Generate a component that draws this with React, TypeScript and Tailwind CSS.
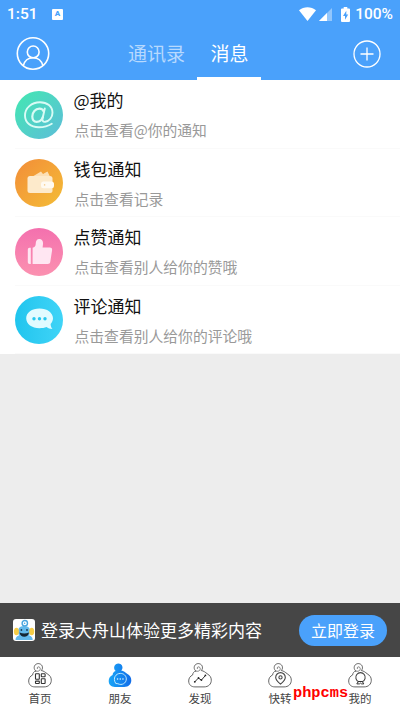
import { useState } from "react";
import type { ReactNode } from "react";

interface NoticeItem {
  title: string;
  desc: string;
  color: string;
  icon: ReactNode;
}

interface NavItem {
  label: string;
  icon: ReactNode;
}

const NOTICES: NoticeItem[] = [
  {
    title: "@我的",
    desc: "点击查看@你的通知",
    color: "bg-linear-to-br from-[#41e8b0] to-[#5cbcd8]",
    icon: (
      <svg className="h-12 w-12" viewBox="0 0 48 48" fill="none" stroke="#d9fbf5" strokeWidth="1.9" strokeLinecap="round" strokeLinejoin="round">
        <path d="M29.800 17.500l-2.200 9.800c-.6 2.700.6 3.900 2.700 3.500 4-.7 7.200-4.500 7.200-9 0-6.500-5.400-10.500-12.500-10.500-8.500 0-15 5.800-15 13.200 0 7.200 5.700 11.700 13.800 11.700 5 0 9.500-1.200 13-3.500" />
        <path strokeWidth="2.200" d="M28.800 20.600c-.7-2-2.200-3-4.400-3-4 0-7.100 3.800-7.100 8 0 3.300 1.700 5.300 4.400 5.300 2.900 0 5.200-2 6.100-4.900" />
      </svg>
    ),
  },
  {
    title: "钱包通知",
    desc: "点击查看记录",
    color: "bg-linear-to-br from-[#f28c38] to-[#f3bd36]",
    icon: (
      <svg className="h-12 w-12" viewBox="0 0 48 48" fill="#fdeacb">
        <path d="M18.500 17l7.500-4.500 2 2.500 4.500-2.600 2.200 4.600z" opacity=".85" />
        <path d="M15 17h20a2.500 2.500 0 012.500 2.500v12A2.500 2.500 0 0135 34H15a2.500 2.500 0 01-2.500-2.500v-12A2.500 2.500 0 0115 17z" />
        <rect x="26" y="22.600" width="13" height="6.600" rx="2.500" fill="#fffaf2" />
        <circle cx="29.600" cy="25.900" r=".8" fill="#f8cf92" />
      </svg>
    ),
  },
  {
    title: "点赞通知",
    desc: "点击查看别人给你的赞哦",
    color: "bg-linear-to-b from-[#f470ae] to-[#fb91b0]",
    icon: (
      <svg className="h-12 w-12" viewBox="0 0 48 48" fill="#ffe6f2">
        <path d="M14.500 19.700h1.300v16.300h-1.300a1.700 1.700 0 01-1.700-1.700V21.400a1.700 1.700 0 011.700-1.700z" />
        <path d="M17.600 19.700c2-.4 3-1.600 3.100-3.800.1-3.200 1.300-4.900 3.600-4.900 2.700 0 4 2 3.700 5l-.4 3.500h7.200c1.700 0 2.500 1.100 2.300 2.700l-1.800 11.600c-.2 1.500-1.100 2.200-2.600 2.200H17.600z" />
      </svg>
    ),
  },
  {
    title: "评论通知",
    desc: "点击查看别人给你的评论哦",
    color: "bg-linear-to-r from-[#1fc5ee] to-[#3fd4f7]",
    icon: (
      <svg className="h-12 w-12" viewBox="0 0 48 48">
        <path fill="#e2fbff" d="M24.500 12.500c7.600 0 13.500 4.200 13.500 9.800 0 2.200-.9 4-2.400 5.700.1 2.200.6 3.800 1.900 5-2.600 0-4.600-.7-6-1.900-2 .8-4.400 1.200-7 1.200-7.600 0-13.300-4.300-13.300-10s5.700-9.800 13.300-9.800z" />
        <g fill="#29c8ef">
          <circle cx="19" cy="22.700" r="1.700" />
          <circle cx="24.500" cy="22.700" r="1.700" />
          <circle cx="30" cy="22.700" r="1.700" />
        </g>
      </svg>
    ),
  },
];

function BodyIcon({ active, children }: { active?: boolean; children: ReactNode }) {
  return (
    <svg className="h-[26px] w-6" viewBox="0 0 24 26" fill="none" stroke={active ? "none" : "#666"} strokeWidth="1" strokeLinecap="round" strokeLinejoin="round">
      <defs>
        <linearGradient id="bodyFill" x1="0" y1="0" x2="1" y2="0">
          <stop offset="0" stopColor="#19a5f7" />
          <stop offset="1" stopColor="#126ce8" />
        </linearGradient>
      </defs>
      <path
        fill={active ? "url(#bodyFill)" : "#fff"}
        d="M7.700 9C5.600 7.300 5.600 3.900 7.900 2.300c2.400-1.600 5.900-.4 6.500 2.500.3 1.500-.2 2.800-1.200 3.700 2.600.4 4.100 1.800 5.900 3.200 2.800 1.800 4.200 3.400 4.200 6.500 0 4-2.900 6.700-7.200 6.700H6.900C3.100 24.900.7 22.600.7 19c0-2.900 1.500-4.900 3.900-6C4.800 11 5.800 9.500 7.700 9z"
      />
      {!active && <path d="M7.700 9c1.400.6 3 .3 3.900-.6 1.100-1.200.8-3-.6-3.500-1.200-.4-2.200.6-1.700 1.700" strokeWidth=".8" />}
      {children}
    </svg>
  );
}

const NAV_ITEMS: NavItem[] = [
  {
    label: "首页",
    icon: (
      <BodyIcon>
        <g stroke="#333" strokeWidth="1.100">
          <rect x="7.500" y="11.800" width="3.800" height="5.400" rx=".5" />
          <rect x="13.300" y="11.800" width="3.800" height="3" rx=".5" />
          <rect x="7.500" y="19.100" width="3.800" height="2.400" rx=".5" />
          <rect x="13.300" y="16.700" width="3.800" height="4.800" rx=".5" />
        </g>
      </BodyIcon>
    ),
  },
  {
    label: "朋友",
    icon: (
      <BodyIcon active>
        <path d="M7.600 21.200c-3.300-5 .3-9.800 4.700-9.800 3.400 0 6 2.300 6 5.500 0 4.400-4.400 6.800-8.100 5z" stroke="#c4ecff" strokeWidth="1" />
        <path d="M9.500 17h.1m2.600 0h.1m2.600 0h.1" stroke="#d9f3ff" strokeWidth="1.500" />
      </BodyIcon>
    ),
  },
  {
    label: "发现",
    icon: (
      <BodyIcon>
        <path d="M6.800 19.800l3.600-3.700 3 2 4-4.600" stroke="#333" strokeWidth="1" />
        <g fill="#222" stroke="none">
          <circle cx="6.800" cy="19.800" r=".9" />
          <circle cx="10.500" cy="16" r=".9" />
          <circle cx="13.400" cy="18.100" r=".9" />
          <circle cx="17.400" cy="13.400" r=".9" />
        </g>
      </BodyIcon>
    ),
  },
  {
    label: "快转",
    icon: (
      <BodyIcon>
        <path d="M12.500 22.200c-2.700-2.400-4.800-4.400-4.800-6.800a4.800 4.800 0 019.600 0c0 2.400-2.100 4.400-4.800 6.800z" stroke="#444" strokeWidth="1.100" />
        <circle cx="12.500" cy="15.400" r="1.600" stroke="#444" strokeWidth="1.100" />
      </BodyIcon>
    ),
  },
  {
    label: "我的",
    icon: (
      <BodyIcon>
        <path d="M10.700 19.700a4.700 4.700 0 113.600 0" stroke="#444" strokeWidth="1.100" />
        <path d="M10.700 19.500h3.600l1.500 2.400h-2.200l-1.100-.8-1.100.8H9.200z" stroke="#333" strokeWidth="1" />
      </BodyIcon>
    ),
  },
];

function StatusBar() {
  return (
    <div className="flex h-7 items-center pr-[7px] pl-[7px] font-[Roboto,sans-serif] text-[15.500px] font-medium text-white">
      <span className="w-[45px] pt-0.5">1:51</span>
      <span className="flex h-[11px] w-[11px] items-center justify-center rounded-[1px] bg-white text-[8px] font-black text-[#4aa1fb]">A</span>
      <div className="ml-auto flex items-center">
        <svg className="h-[14px] w-[17px]" viewBox="0 0 17 14" fill="#fff">
          <path d="M8.500 14L0 3.200C4.800-.7 12.200-.7 17 3.200z" />
        </svg>
        <svg className="ml-[3px] h-[13px] w-[13px]" viewBox="0 0 13 13" fill="#fff">
          <path d="M13 0v13H0z" opacity=".4" />
          <path d="M8 5v8H0z" />
        </svg>
        <svg className="ml-[9px] h-[15px] w-[9px]" viewBox="0 0 9 15">
          <path fill="#fff" d="M2.700 0h3.600v1.500H8a1 1 0 011 1V14a1 1 0 01-1 1H1a1 1 0 01-1-1V2.500a1 1 0 011-1h1.700z" />
          <path fill="#4aa1fb" d="M5.300 3.700L2 8.900h2v3.800l3.200-5.200h-1.900z" />
        </svg>
        <span className="ml-[5px] pt-0.5">100%</span>
      </div>
    </div>
  );
}

export default function App() {
  const [tab, setTab] = useState("消息");

  return (
    <div className="flex h-[710px] w-[400px] flex-col overflow-hidden bg-[#ededed] font-['Noto_Sans_CJK_SC','Liberation_Sans',sans-serif]">
      {/* Header */}
      <header className="h-20 shrink-0 bg-[#4aa1fb]">
        <StatusBar />
        <div className="flex h-[52px] items-center pr-[19px] pl-4">
          <svg className="h-[34px] w-[34px]" viewBox="0 0 34 34" fill="none" stroke="#fff" strokeWidth="1.6">
            <circle cx="17" cy="16.500" r="15.700" />
            <circle cx="17.200" cy="14.900" r="5.900" />
            <path d="M7.300 28.800c1.300-5 5-8 9.800-8s8.500 3 9.800 8" />
          </svg>
          <div className="ml-[67px] flex h-full">
            {["通讯录", "消息"].map((name) => (
              <button
                key={name}
                type="button"
                onClick={() => setTab(name)}
                className={[
                  "h-full border-b-[3px] pb-px text-[19px] leading-none",
                  name === "通讯录" ? "w-20 pr-px" : "w-16 pl-px",
                  tab === name ? "border-white text-white" : "border-transparent text-[#b7d9fe]",
                ].join(" ")}
              >
                {name}
              </button>
            ))}
          </div>
          <svg className="mb-px ml-auto h-7 w-7" viewBox="0 0 28 28" fill="none" stroke="#fff" strokeWidth="1.300">
            <circle cx="14" cy="14" r="13" />
            <path d="M14 7.500v13M7.500 14h13" />
          </svg>
        </div>
      </header>

      {/* Notices */}
      <ul className="h-[274px] shrink-0 bg-white">
        {NOTICES.map((n) => (
          <li key={n.title} className="ml-[15px] flex h-[68.500px] border-b border-[#fafafa]">
            <div className={["mt-[10.500px] h-12 w-12 shrink-0 rounded-full", n.color].join(" ")}>{n.icon}</div>
            <div className="ml-[10.500px] flex-1">
              <p className="mt-2 text-[17px] leading-6 text-[#111]">{n.title}</p>
              <p className="mt-[8px] ml-px text-[14.800px] leading-5 text-[#999]">{n.desc}</p>
            </div>
          </li>
        ))}
      </ul>

      {/* Login banner */}
      <div className="mt-auto flex h-[54px] shrink-0 items-center bg-[#464646] pr-[13px] pl-[13px]">
        <svg className="h-[22px] w-[22px]" viewBox="0 0 22 22">
          <rect width="22" height="22" rx="3" fill="#fff" />
          <path d="M2.500 21c0-2.500 1.500-4 3.500-4.500C3.500 10 6.500 7 11.200 7s7.500 3 5 9.500c2 .5 3.500 2 3.500 4.500z" fill="#63b9ec" />
          <circle cx="11.800" cy="4.200" r="2.700" fill="none" stroke="#4aa5df" strokeWidth="1.400" />
          <circle cx="11.600" cy="4.200" r=".8" fill="#4aa5df" />
          <ellipse cx="3.400" cy="12.500" rx="2.500" ry="3.800" fill="#f6cd47" />
          <ellipse cx="18.700" cy="12.500" rx="2.500" ry="3.800" fill="#f6cd47" />
          <circle cx="8.400" cy="11" r=".9" fill="#173c5a" />
          <circle cx="14" cy="11" r=".9" fill="#173c5a" />
          <path d="M6.500 13.500c3 1.300 6.500 1.300 9.500 0-.6 3-2.200 4.200-4.700 4.200s-4.200-1.200-4.800-4.200z" fill="#152634" />
        </svg>
        <span className="ml-1.5 text-[17px] text-white">登录大舟山体验更多精彩内容</span>
        <button type="button" className="ml-auto h-[31px] w-[88px] rounded-full bg-[#4aa1fb] text-base leading-none text-white">
          立即登录
        </button>
      </div>

      {/* Bottom nav */}
      <nav className="relative grid h-[53px] shrink-0 grid-cols-5 bg-white">
        {NAV_ITEMS.map((item) => (
          <button key={item.label} type="button" className="flex flex-col items-center pt-[5px]">
            {item.icon}
            <span className="mt-[2px] text-[11.500px] leading-4 text-[#444]">{item.label}</span>
          </button>
        ))}
        <span className="absolute top-[26px] left-[293px] font-['Liberation_Mono',monospace] text-[15.300px] leading-5 font-bold text-[#f00]">phpcms</span>
      </nav>
    </div>
  );
}
